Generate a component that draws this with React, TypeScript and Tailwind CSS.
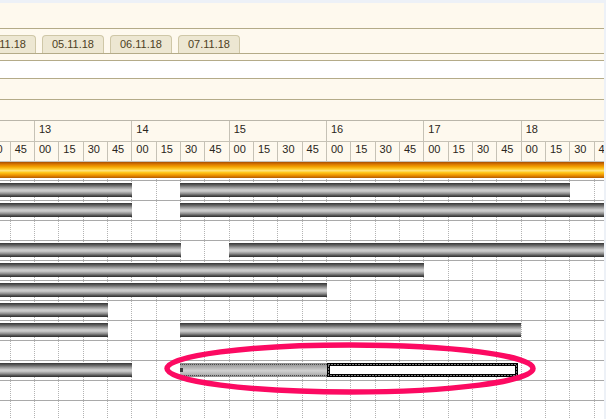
const HOURS = [12, 13, 14, 15, 16, 17, 18];
const MINUTES = ["00", "15", "30", "45"];

type Bar = [number, number];

// bars in px from the left edge of the visible chart
const rows: Bar[][] = [
  [[0, 132], [180, 570]],
  [[0, 132], [180, 604]],
  [],
  [[0, 181], [229, 604]],
  [[0, 424]],
  [[0, 327]],
  [[0, 108]],
  [[0, 108], [180, 521]],
  [],
  [[0, 132]],
  [],
  [],
];
const SELECTED_ROW = 9;

const tabs = ["04.11.18", "05.11.18", "06.11.18", "07.11.18"];

function Cells() {
  return (
    <div className="ml-[-63.333px] flex h-full w-[681.333px]">
      {Array.from({ length: 28 }).map((_, i) => (
        <div key={i} className="h-full w-[24.333px] shrink-0 border-l border-dotted border-[#b3b3b3]" />
      ))}
    </div>
  );
}

function GrayBar({ left, right }: { left: number; right: number }) {
  return (
    <div
      className="absolute top-[2px] h-[14px] bg-[linear-gradient(to_bottom,#353535_0%,#5c5c5c_14%,#9a9a9a_32%,#cfcfcf_50%,#c4c4c4_60%,#8e8e8e_76%,#505050_90%,#2c2c2c_100%)]"
      style={{ left, width: right - left }}
    />
  );
}

function Selection() {
  return (
    <>
      <div className="absolute left-[180px] top-[2px] h-[14px] w-[147px] bg-[linear-gradient(to_bottom,#8c8c8c_0%,#b0b0b0_30%,#d2d2d2_55%,#b4b4b4_80%,#8a8a8a_100%)]">
        <div className="absolute inset-x-0 inset-y-[1px] border-y border-dotted border-[#4a4a4a]" />
        <div className="absolute left-0 top-[5px] h-[4px] w-[3px] bg-[#3c3c3c]" />
      </div>
      <div className="absolute left-[327px] top-[2px] h-[14px] w-[191px]">
        <svg width="191" height="14" className="block">
          <rect x="0" y="0" width="191" height="14" fill="#000" />
          <rect x="3" y="3" width="185" height="8" fill="#fff" />
          <rect x="1.5" y="1.5" width="188" height="11" fill="none" stroke="#fff" strokeWidth="1" strokeDasharray="1 2" />
        </svg>
      </div>
    </>
  );
}

export default function App() {
  return (
    <div className="relative flex h-[419px] w-[606px] flex-col overflow-hidden bg-[#edf1f7] font-['Liberation_Sans',Arial,sans-serif] text-[11px]">
      <div className="h-[3px] shrink-0" />
      <div className="flex min-h-0 flex-1">
        <div className="flex w-[604px] flex-col overflow-hidden bg-[#fef9ee]">
          {/* toolbar band */}
          <div className="h-[26px] shrink-0 border-b border-[#b4ab88]" />
          <div className="flex h-[25px] shrink-0 items-end border-b border-[#b4ab88]">
            <div className="ml-[-26px] flex items-end gap-[6px]">
              {tabs.map((t) => (
                <div
                  key={t}
                  className="h-[18px] w-[62px] shrink-0 rounded-t-[4px] border-x border-t border-[#cfc7a7] bg-[#ede7d2] text-center leading-[17px] text-[#4d411f]"
                >
                  {t}
                </div>
              ))}
            </div>
          </div>
          <div className="h-[7px] shrink-0 border-b border-[#b4ab88]" />
          <div className="h-[18px] shrink-0 border-b border-[#b4ab88] bg-white" />
          <div className="h-[21px] shrink-0 border-b border-[#b4ab88]" />
          <div className="h-[20px] shrink-0" />

          {/* time header */}
          <div className="h-[21px] shrink-0 overflow-hidden border-t border-[#bab6aa] text-[#2a2620]">
            <div className="ml-[-63.333px] flex h-full w-[681.333px]">
              {HOURS.map((h) => (
                <div key={h} className="h-full w-[97.333px] shrink-0 border-l border-[#c6c2b6] pl-[4px] leading-[16px]">
                  {h}
                </div>
              ))}
            </div>
          </div>
          <div className="h-[21px] shrink-0 overflow-hidden border-y border-[#c6c2b6] text-[#2a2620]">
            <div className="ml-[-63.333px] flex h-full w-[681.333px]">
              {HOURS.flatMap((h) =>
                MINUTES.map((m) => (
                  <div key={`${h}-${m}`} className="h-full w-[24.333px] shrink-0 border-l border-[#c6c2b6] pl-[4px] leading-[14px]">
                    {m}
                  </div>
                )),
              )}
            </div>
          </div>

          {/* summary row */}
          <div className="relative h-[18px] shrink-0 overflow-hidden bg-white">
            <Cells />
            <div className="absolute left-0 top-0 h-[16px] w-full bg-[linear-gradient(to_bottom,#a84e00_0%,#d97800_14%,#f5a400_30%,#ffd236_46%,#ffe480_54%,#ffc61a_66%,#ef9400_82%,#b45a00_100%)]" />
          </div>

          {rows.map((bars, i) => (
            <div key={i} className="relative h-[20px] shrink-0 overflow-hidden border-t border-[#a9a9a9] bg-white">
              <Cells />
              {bars.map(([l, r]) => (
                <GrayBar key={l} left={l} right={r} />
              ))}
              {i === SELECTED_ROW && <Selection />}
            </div>
          ))}
        </div>
        <div className="w-[2px] shrink-0" />
      </div>

      <svg className="pointer-events-none absolute left-0 top-0" width="606" height="419">
        <ellipse cx="350" cy="368.5" rx="183" ry="23.5" fill="none" stroke="#fc0a62" strokeWidth="5.5" />
      </svg>
    </div>
  );
}
